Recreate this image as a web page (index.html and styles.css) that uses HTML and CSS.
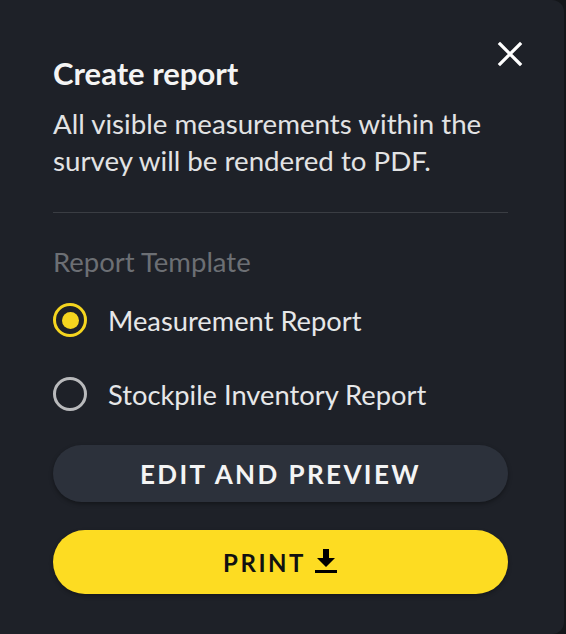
FILE: index.html
```html
<!DOCTYPE html>
<html lang="en">
<head>
<meta charset="utf-8">
<title>Create report</title>
<link rel="stylesheet" href="styles.css">
</head>
<body>
<div class="panel">
  <div class="header">
    <h1 class="title">Create report</h1>
    <button class="close" aria-label="Close">
      <svg viewBox="0 0 28 28" width="28" height="28"><path d="M4 4 L24 24 M24 4 L4 24" stroke="#ffffff" stroke-width="3.2" stroke-linecap="square" fill="none"/></svg>
    </button>
  </div>
  <p class="desc">All visible measurements within the survey will be rendered to PDF.</p>
  <div class="divider"></div>
  <div class="label">Report Template</div>
  <div class="options">
    <label class="option"><span class="radio checked"><span class="dot"></span></span><span class="opt-text">Measurement Report</span></label>
    <label class="option"><span class="radio"></span><span class="opt-text">Stockpile Inventory Report</span></label>
  </div>
  <button class="btn btn-secondary">EDIT AND PREVIEW</button>
  <button class="btn btn-primary">PRINT
    <svg class="dl" viewBox="0 0 24 28" width="24" height="28"><path d="M9 2 H15 V11 H21 L12 20 L3 11 H9 Z" fill="#000"/><rect x="1" y="23" width="22" height="3" fill="#000"/></svg>
  </button>
</div>
</body>
</html>
```

FILE: styles.css
```css
html, body {
  margin: 0;
  padding: 0;
  background: #14161a;
  height: 100%;
}
body {
  font-family: "Lato", "Noto Sans", sans-serif;
}
.panel {
  box-sizing: border-box;
  width: 564px;
  height: 634px;
  background: #1e2128;
  border-radius: 0 12px 12px 0;
  padding: 40px 56px 0 53px;
  display: flex;
  flex-direction: column;
}
.header {
  display: flex;
  justify-content: space-between;
  align-items: flex-start;
}
.title {
  margin: 17px 0 0;
  font-size: 31px;
  line-height: 32px;
  font-weight: 700;
  color: #f4f4f4;
}
.close {
  width: 28px;
  height: 28px;
  padding: 0;
  margin: 0 -16px 0 0;
  border: none;
  background: none;
  display: flex;
}
.desc {
  margin: 16px 0 0;
  font-size: 27.7px;
  line-height: 37px;
  color: #e2e3e4;
}
.divider {
  margin-top: 33px;
  height: 1px;
  background: #3a3d43;
}
.label {
  margin-top: 31px;
  font-size: 27.5px;
  line-height: 36px;
  color: #6c6f74;
}
.options {
  display: flex;
  flex-direction: column;
  gap: 30px;
  margin-top: 18px;
}
.option {
  display: flex;
  align-items: center;
  gap: 21px;
  height: 44px;
}
.radio {
  box-sizing: border-box;
  width: 34px;
  height: 34px;
  border-radius: 50%;
  border: 3px solid #b9babc;
  display: flex;
  align-items: center;
  justify-content: center;
  flex: none;
}
.radio.checked {
  border-color: #f5d51f;
}
.dot {
  width: 17px;
  height: 17px;
  border-radius: 50%;
  background: #f5d51f;
}
.opt-text {
  font-size: 27.3px;
  color: #e6e7e8;
}
.btn {
  border: none;
  border-radius: 32px;
  display: flex;
  align-items: center;
  justify-content: center;
  font-family: "Lato", "Noto Sans", sans-serif;
  font-weight: 700;
}
.btn-secondary {
  margin-top: 29px;
  height: 57px;
  background: #2c313b;
  color: #f4f4f4;
  font-size: 26px;
  letter-spacing: 2.4px;
  box-shadow: 0 2px 4px rgba(0, 0, 0, 0.35);
}
.btn-primary {
  margin-top: 28px;
  height: 64px;
  background: #fddc22;
  color: #111;
  font-size: 24px;
  letter-spacing: 2.5px;
  gap: 8px;
  box-shadow: 0 2px 4px rgba(0, 0, 0, 0.3);
}
.dl {
  margin-bottom: 2px;
}
```
